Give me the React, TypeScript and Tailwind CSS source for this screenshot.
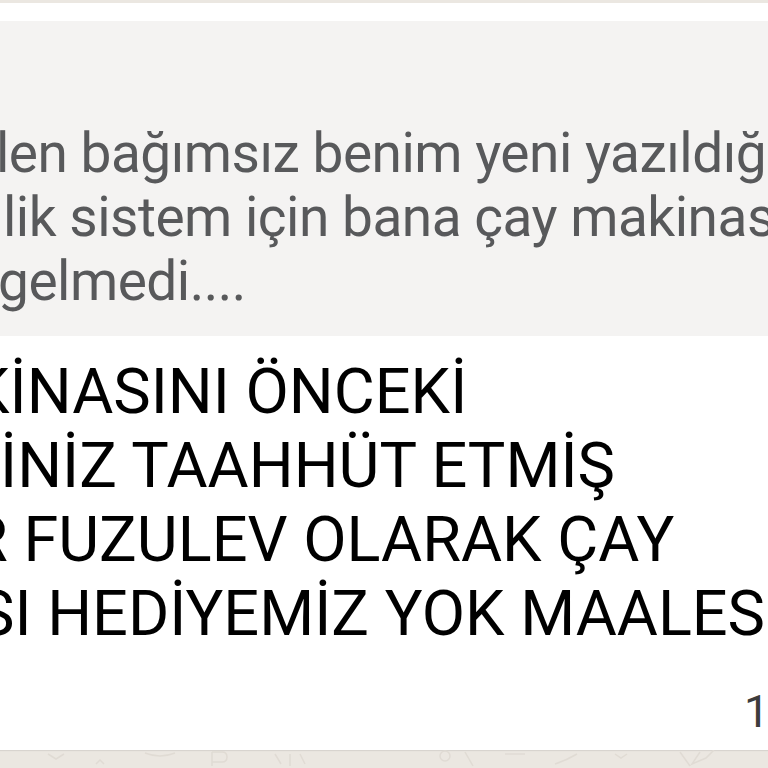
export default function App() {
  const quoteLines = [
    { text: 'len bağımsız benim yeni yazıldığım', ml: '-ml-[4px]' },
    { text: 'lik sistem için bana çay makinası', ml: 'ml-[3px]' },
    { text: 'gelmedi....', ml: '-ml-[2px]' },
  ];

  return (
    <div
      className="w-[768px] h-[768px] overflow-hidden bg-[#ebe7e1] flex flex-col"
      style={{ fontFamily: 'Roboto, "Noto Sans", sans-serif' }}
    >
      <div className="h-[3px] shrink-0" />

      {/* message bubble */}
      <div className="h-[747px] shrink-0 bg-white pt-[18px] flex flex-col shadow-[0_1px_1px_rgba(0,0,0,0.08)]">
        {/* quoted message */}
        <div className="h-[315px] bg-[#f4f3f2] pt-[100px] text-[#58595b] text-[55px] leading-[64px] tracking-[-0.5px] overflow-hidden">
          {quoteLines.map((l) => (
            <div key={l.text} className={`whitespace-nowrap ${l.ml}`}>
              {l.text}
            </div>
          ))}
        </div>

        {/* message body */}
        <div className="mt-[19px] text-black text-[63px] leading-[74px] overflow-hidden">
          <div className="whitespace-nowrap -ml-[30px]">KİNASINI ÖNCEKİ</div>
          <div className="whitespace-nowrap">İNİZ TAAHHÜT ETMİŞ</div>
          <div className="whitespace-nowrap -ml-[31px]">R FUZULEV OLARAK ÇAY</div>
          <div className="whitespace-nowrap -ml-[23px]">SI HEDİYEMİZ YOK MAALESEF</div>
        </div>

        {/* time */}
        <div className="mt-auto mb-[12px] flex whitespace-nowrap">
          <span className="ml-[744px] text-[45px] leading-[52px] text-[#3c3c3c]">12:47</span>
        </div>
      </div>

      {/* wallpaper doodles */}
      <svg className="shrink-0" width="768" height="18" viewBox="0 0 768 18" fill="none" stroke="#e0dbd4" strokeWidth="1.5">
        <path d="M48 4 l8 5 l8 -5" />
        <path d="M96 14 l4 -4 l4 4" />
        <path d="M145 3 q15 6 30 0" />
        <path d="M212 2 v14 M212 2 h10 q5 0 5 5 q0 5 -5 5 h-10" />
        <path d="M275 4 l6 10 M290 4 v12 M300 4 l5 10" />
        <path d="M440 6 a5 5 0 1 0 10 0 a5 5 0 1 0 -10 0" />
        <path d="M465 2 l8 14" />
        <path d="M505 4 h20" />
        <path d="M555 14 q12 -4 22 -10" />
        <path d="M615 4 l6 4 l6 -4" />
        <path d="M680 2 l10 14 M700 2 l-8 12 l14 -6 l8 -8" />
      </svg>
    </div>
  );
}
